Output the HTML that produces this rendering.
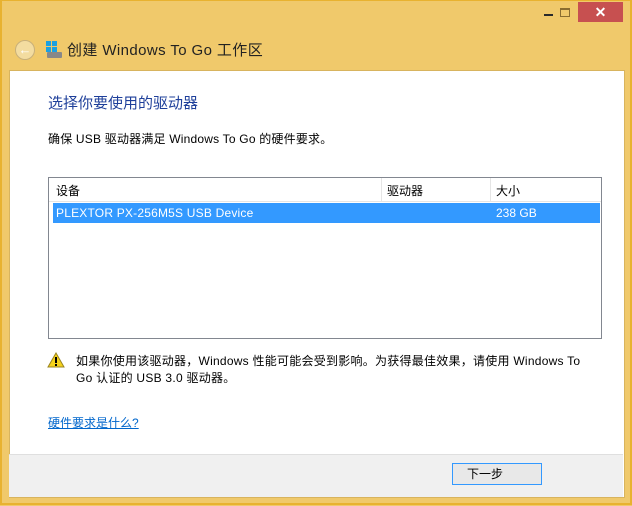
<!DOCTYPE html>
<html><head><meta charset="utf-8"><style>
body{margin:0;width:632px;height:506px;overflow:hidden;background:#f0c96b;font-family:"Liberation Sans","Noto Sans CJK SC",sans-serif;position:relative}
.frame{position:absolute;left:0;top:0;width:628px;height:502px;border:2px solid #e8b230;border-top:1px solid #e8b230}
.a{position:absolute;white-space:nowrap}
.content{position:absolute;left:9px;top:70px;width:614px;height:426px;background:#fff;border:1px solid #d8b45e}
.footer{position:absolute;left:9px;top:454px;width:614px;height:42px;background:#f0f0f0;border-top:1px solid #dfdfdf}
</style></head><body>
<div class="frame"></div>
<div class="a" style="left:544px;top:14px;width:9px;height:2px;background:#2a2a2a"></div>
<div class="a" style="left:560px;top:8px;width:8px;height:6px;border:1px solid #8a6d30;border-top-width:2px"></div>
<div class="a" style="left:578px;top:2px;width:45px;height:20px;background:#c75050;color:#fff;font-size:14px;text-align:center;line-height:20px;font-weight:bold">✕</div>
<div class="a" style="left:15px;top:40px;width:18px;height:18px;border-radius:50%;border:1px solid #c8b07a;background:#f3dca0;color:#fff;font-size:13px;line-height:18px;text-align:center">←</div>
<div class="a" style="left:46px;top:41px;width:5px;height:5px;background:#1ba1e2;box-shadow:6px 0 #1ba1e2,0 6px #1ba1e2,6px 6px #1ba1e2"></div>
<div class="a" style="left:47px;top:52px;width:15px;height:6px;background:#888;border-radius:1px"></div>
<div class="a" style="left:67px;top:39px;font-size:15px;color:#222;letter-spacing:0.4px">创建 Windows To Go 工作区</div>
<div class="content"></div>
<div class="a" style="left:48px;top:92px;font-size:15px;color:#1e3f9a">选择你要使用的驱动器</div>
<div class="a" style="left:48px;top:130px;font-size:12px;color:#000;letter-spacing:0.2px">确保 USB 驱动器满足 Windows To Go 的硬件要求。</div>
<div class="a" style="left:48px;top:177px;width:552px;height:160px;border:1px solid #828790;background:#fff"></div>
<div class="a" style="left:49px;top:178px;width:552px;height:23px;border-bottom:1px solid #e5e5e5"></div>
<div class="a" style="left:381px;top:178px;width:1px;height:23px;background:#e5e5e5"></div>
<div class="a" style="left:490px;top:178px;width:1px;height:23px;background:#e5e5e5"></div>
<div class="a" style="left:56px;top:182px;font-size:12px">设备</div>
<div class="a" style="left:387px;top:182px;font-size:12px">驱动器</div>
<div class="a" style="left:496px;top:182px;font-size:12px">大小</div>
<div class="a" style="left:53px;top:203px;width:547px;height:20px;background:#3399ff"></div>
<div class="a" style="left:56px;top:206px;font-size:12px;color:#fff;letter-spacing:0.2px">PLEXTOR PX-256M5S USB Device</div>
<div class="a" style="left:496px;top:206px;font-size:12px;color:#fff">238 GB</div>
<svg class="a" style="left:47px;top:352px" width="18" height="16"><path d="M9 1L17 15H1Z" fill="#f5d21c" stroke="#9a8420"/><rect x="8" y="5" width="2" height="6" fill="#000"/><rect x="8" y="12" width="2" height="2" fill="#000"/></svg>
<div class="a" style="left:76px;top:353px;font-size:12px;line-height:17px;letter-spacing:0.25px">如果你使用该驱动器，Windows 性能可能会受到影响。为获得最佳效果，请使用 Windows To<br>Go 认证的 USB 3.0 驱动器。</div>
<div class="a" style="left:48px;top:414px;font-size:12px;color:#0066cc;text-decoration:underline">硬件要求是什么?</div>
<div class="footer"></div>
<div class="a" style="left:452px;top:463px;width:74px;height:20px;border:1px solid #3399ff;background:#e8e8e8;font-size:12px;line-height:20px;padding-left:14px">下一步</div>
</body></html>
